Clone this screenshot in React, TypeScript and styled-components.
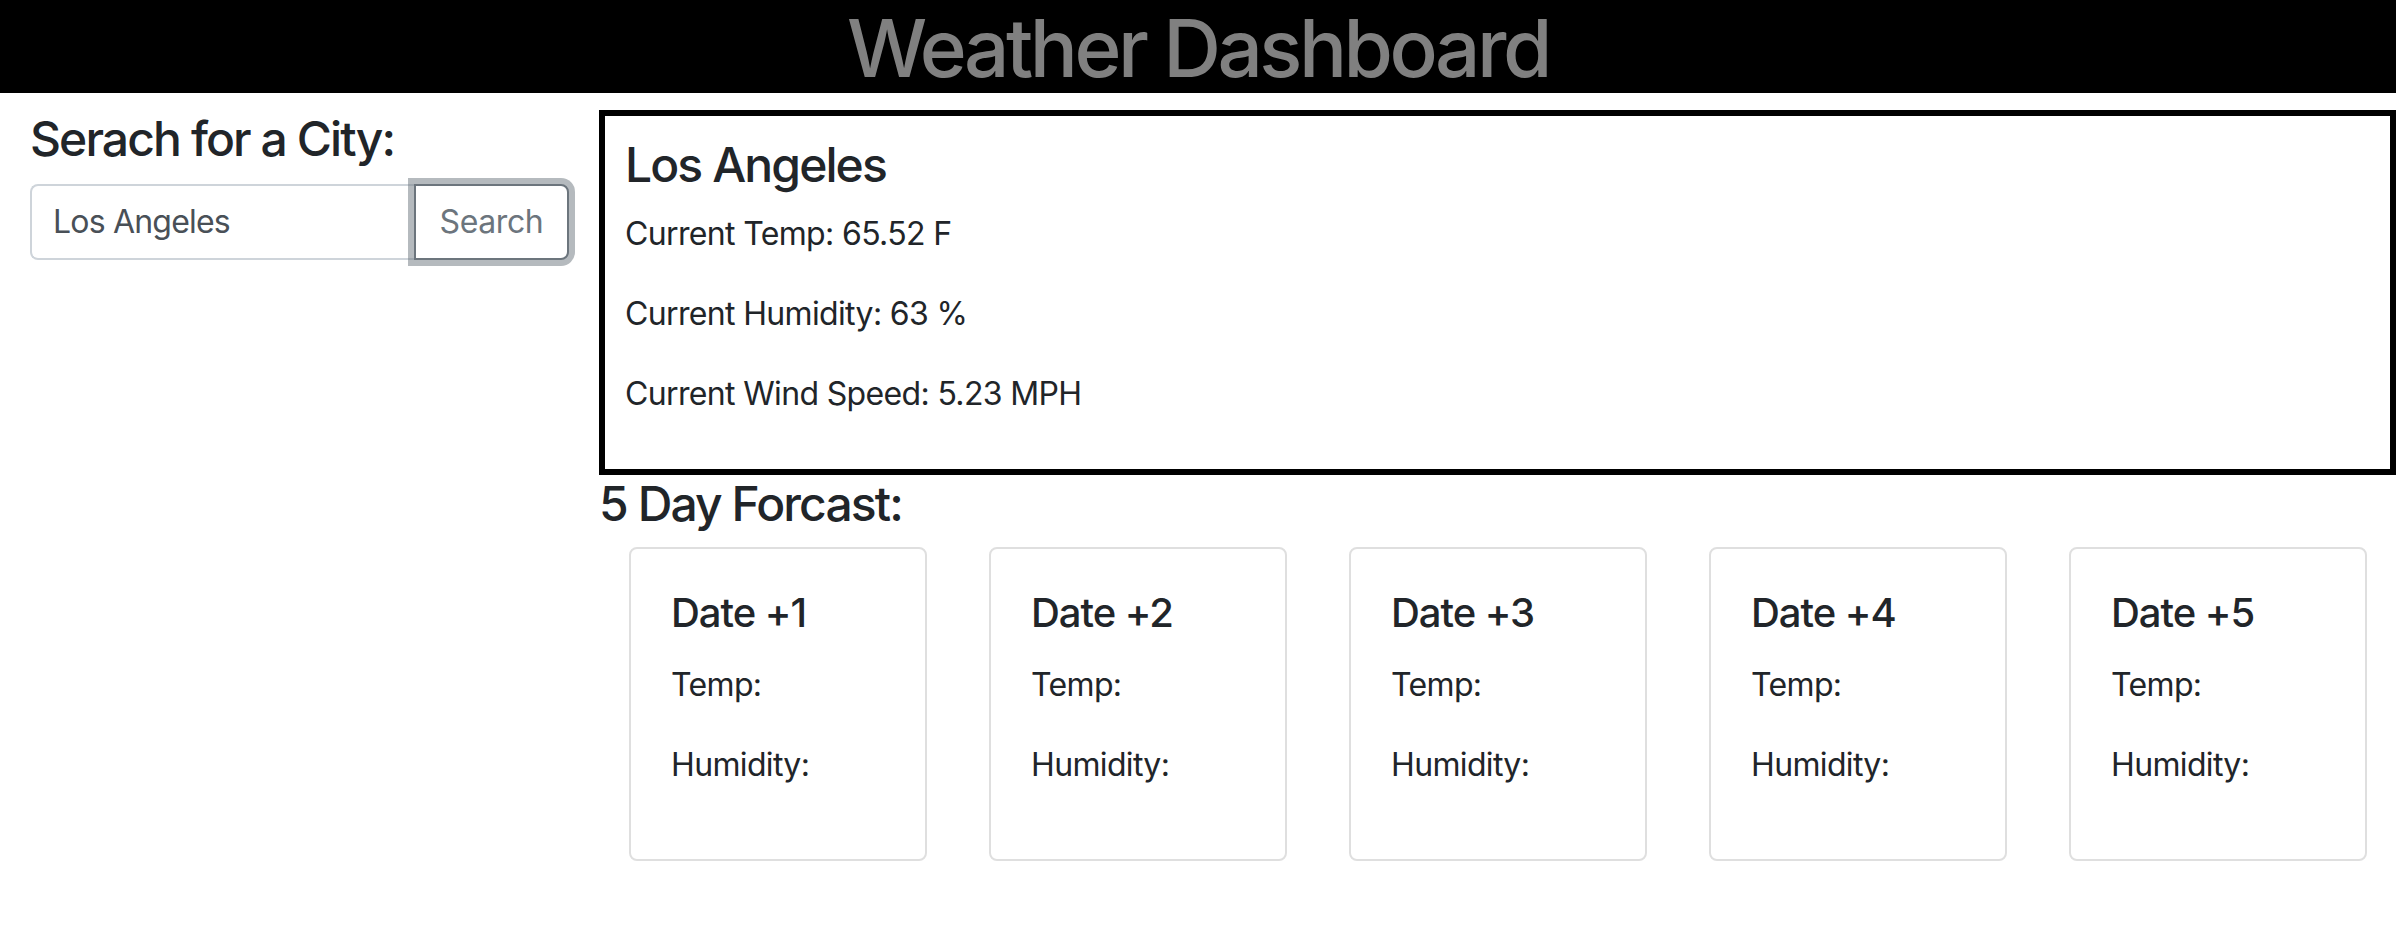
import React from "react";
import styled, { createGlobalStyle } from "styled-components";

const GlobalStyle = createGlobalStyle`
  * { box-sizing: border-box; }
  html, body { margin: 0; padding: 0; background: #ffffff; }
  body {
    font-family: Inter, "Noto Sans", "Liberation Sans", sans-serif;
    color: #212529;
    font-size: 32px;
    line-height: 1.5;
    letter-spacing: -0.65px;
    overflow-x: hidden;
  }
`;

const Header = styled.header`
  height: 93px;
  background: #000000;
  display: flex;
  justify-content: center;
  align-items: flex-start;
`;

const Title = styled.h1`
  margin: 0;
  font-size: 80px;
  font-weight: 500;
  line-height: 96px;
  color: #808080;
  letter-spacing: -3.5px;
`;

const Main = styled.main`
  display: grid;
  grid-template-columns: 599px 1fr;
  padding-top: 17px;
`;

const SearchColumn = styled.section`
  padding: 0 30px;
`;

const Heading = styled.h4<{ $spacing?: string }>`
  margin: ${(p) => p.$spacing ?? "0 0 16px"};
  font-size: 48px;
  font-weight: 500;
  line-height: 57.6px;
  letter-spacing: -1.9px;
`;

const InputGroup = styled.div`
  display: flex;
  height: 76px;
`;

const CityInput = styled.input`
  flex: 1;
  min-width: 0;
  height: 76px;
  border: 2px solid #ced4da;
  border-right: none;
  border-radius: 8px 0 0 8px;
  padding: 0 21px;
  font-family: inherit;
  font-size: 32px;
  letter-spacing: -0.8px;
  color: #495057;
  background: #ffffff;
  outline: none;
`;

const SearchButton = styled.button`
  width: 155px;
  height: 76px;
  border: 2px solid #6c757d;
  border-radius: 0 8px 8px 0;
  background: #ffffff;
  color: #6c757d;
  font-family: inherit;
  font-size: 32px;
  letter-spacing: -0.4px;
  box-shadow: 0 0 0 6px rgba(108, 117, 125, 0.5);
  padding: 0;
  cursor: pointer;
`;

const WeatherColumn = styled.section`
  display: flex;
  flex-direction: column;
`;

const CurrentCard = styled.div`
  border: 6px solid #000000;
  padding: 20px 20px 19px;
`;

const Line = styled.p`
  margin: 0 0 32px;
  font-size: 32px;
  line-height: 48px;
`;

const ForecastRow = styled.div`
  display: flex;
  gap: 62px;
  padding-left: 30px;
`;

const ForecastCard = styled.div`
  width: 298px;
  height: 314px;
  border: 2px solid #dfdfdf;
  border-radius: 8px;
  padding: 40px;
`;

const CardTitle = styled.h5`
  margin: 0 0 24px;
  font-size: 40px;
  font-weight: 500;
  line-height: 48px;
  letter-spacing: -1.05px;
`;

const days = [1, 2, 3, 4, 5];

export default function App() {
  return (
    <>
      <GlobalStyle />
      <Header>
        <Title>Weather Dashboard</Title>
      </Header>
      <Main>
        <SearchColumn>
          <Heading>Serach for a City:</Heading>
          <InputGroup>
            <CityInput defaultValue="Los Angeles" />
            <SearchButton>Search</SearchButton>
          </InputGroup>
        </SearchColumn>
        <WeatherColumn>
          <CurrentCard>
            <Heading>Los Angeles</Heading>
            <Line>Current Temp: 65.52 F</Line>
            <Line>Current Humidity: 63 %</Line>
            <Line>Current Wind Speed: 5.23 MPH</Line>
          </CurrentCard>
          <Heading $spacing="0 0 15px">5 Day Forcast:</Heading>
          <ForecastRow>
            {days.map((d) => (
              <ForecastCard key={d}>
                <CardTitle>Date +{d}</CardTitle>
                <Line>Temp:</Line>
                <Line>Humidity:</Line>
              </ForecastCard>
            ))}
          </ForecastRow>
        </WeatherColumn>
      </Main>
    </>
  );
}
